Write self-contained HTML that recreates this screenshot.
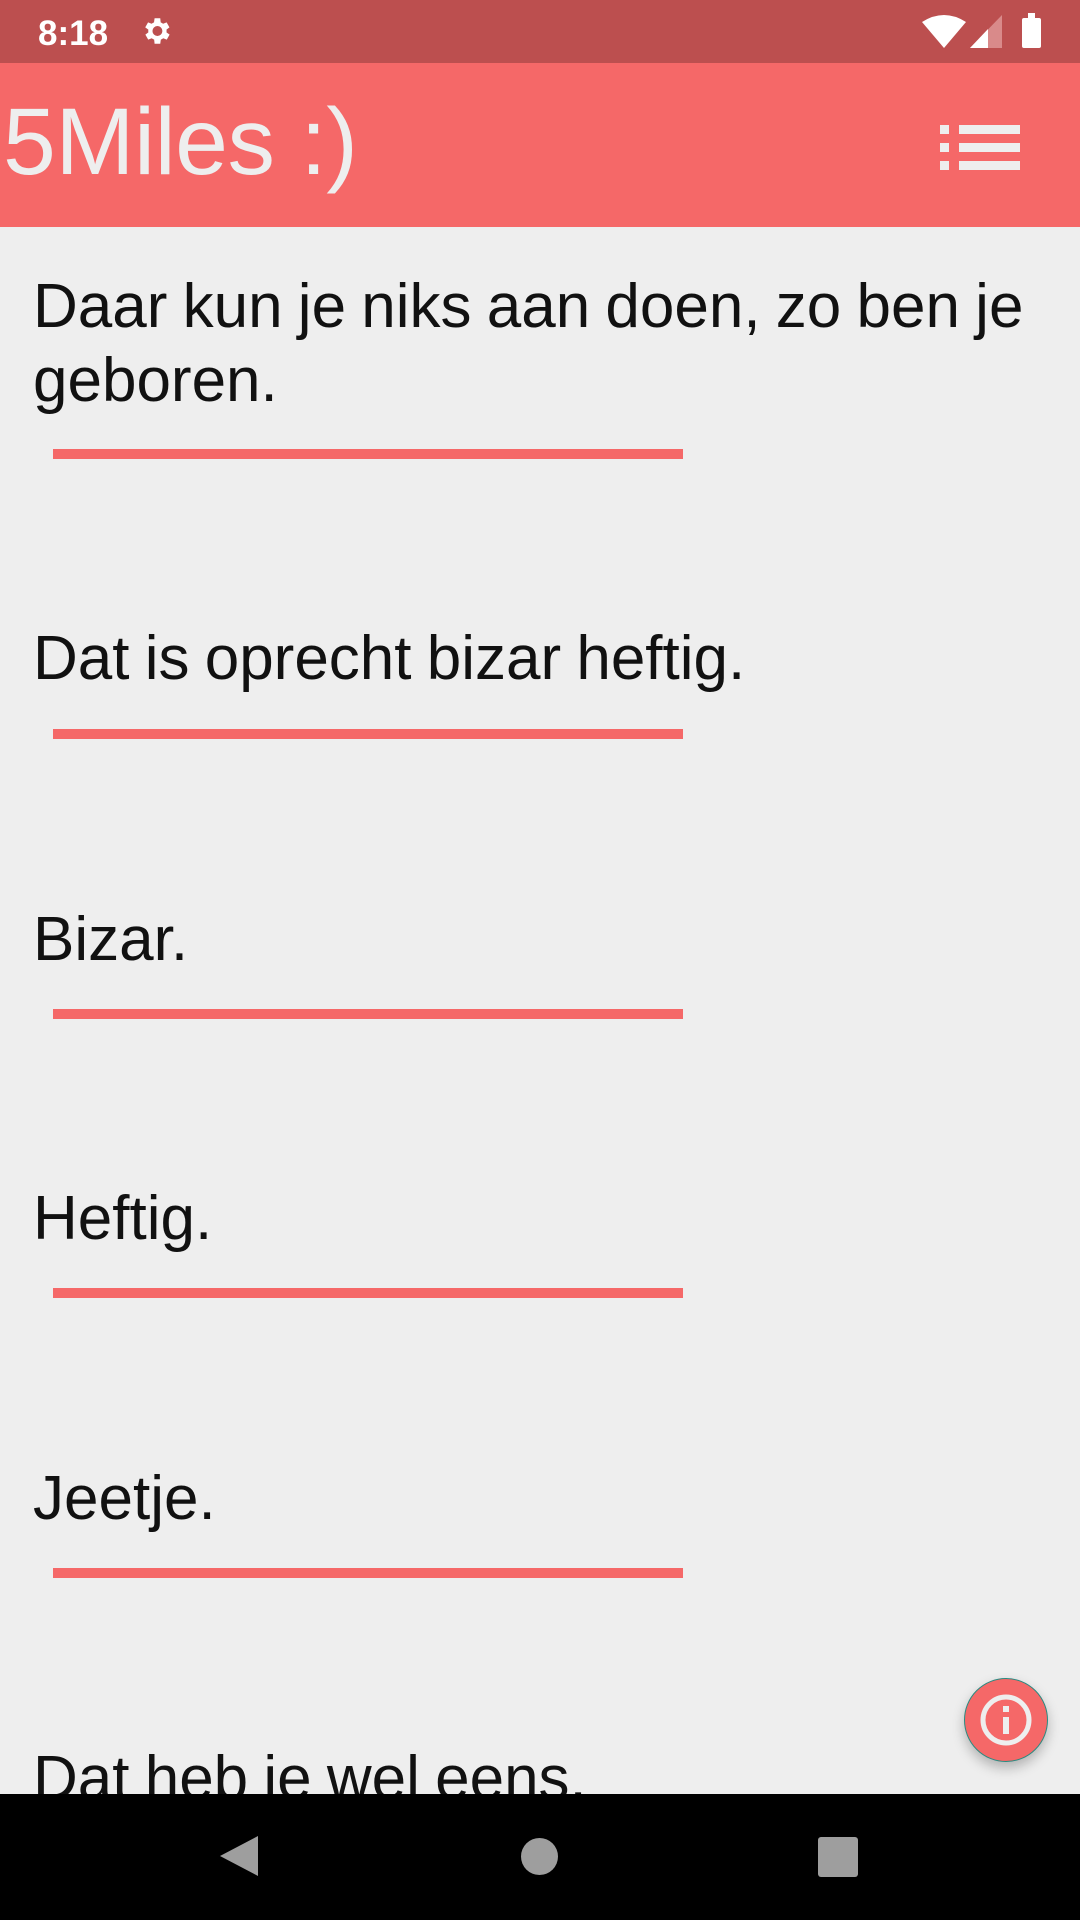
<!DOCTYPE html>
<html><head><meta charset="utf-8"><style>
*{margin:0;padding:0}
body{width:1080px;height:1920px;background:#eeeeee;position:relative;overflow:hidden;font-family:"Liberation Sans",sans-serif}
.a{position:absolute}
.t{position:absolute;left:33px;font-size:62px;line-height:64px;color:#111;white-space:nowrap;word-spacing:-2px}
.u{position:absolute;left:53px;width:630px;height:10px;background:#f56868}
</style></head><body>
<div class="a" style="left:0;top:0;width:1080px;height:63px;background:#bc4f4f"></div>
<div class="a" style="left:38px;top:14px;font-size:35px;line-height:40px;color:#fff;font-weight:bold">8:18</div>
<svg class="a" style="left:139px;top:14px" width="34" height="34" viewBox="0 0 24 24"><path fill="#fff" d="M19.4 13a7.5 7.5 0 0 0 0-2l2.1-1.6-2-3.5-2.5 1a7 7 0 0 0-1.7-1L15 3h-4l-.4 2.9a7 7 0 0 0-1.7 1l-2.5-1-2 3.5L6.6 11a7.5 7.5 0 0 0 0 2l-2.1 1.6 2 3.5 2.5-1a7 7 0 0 0 1.7 1L11 21h4l.4-2.9a7 7 0 0 0 1.7-1l2.5 1 2-3.5zM13 15.5a3.5 3.5 0 1 1 0-7 3.5 3.5 0 0 1 0 7z"/></svg>
<svg class="a" style="left:922px;top:14px" width="44" height="34" viewBox="0 0 44 34"><path fill="#fff" d="M0 8Q22-6 44 8L22 34z"/></svg>
<svg class="a" style="left:970px;top:15px" width="32" height="33" viewBox="0 0 32 33"><path fill="#d98a8a" d="M32 0V33H0z"/><path fill="#fff" d="M18 14V33H0L18 14z"/></svg>
<div class="a" style="left:1022px;top:18px;width:19px;height:30px;background:#fff;border-radius:2px"></div>
<div class="a" style="left:1028px;top:13px;width:7px;height:6px;background:#fff"></div>
<div class="a" style="left:0;top:63px;width:1080px;height:164px;background:#f56868"></div>
<div class="a" style="left:3px;top:95px;font-size:95px;line-height:95px;color:#eeeeee;white-space:nowrap;letter-spacing:-0.5px">5Miles :)</div>
<div class="a" style="left:940px;top:125px;width:9px;height:9px;background:#eee"></div>
<div class="a" style="left:940px;top:143px;width:9px;height:9px;background:#eee"></div>
<div class="a" style="left:940px;top:161px;width:9px;height:9px;background:#eee"></div>
<div class="a" style="left:959px;top:125px;width:61px;height:9px;background:#eee"></div>
<div class="a" style="left:959px;top:143px;width:61px;height:9px;background:#eee"></div>
<div class="a" style="left:959px;top:161px;width:61px;height:9px;background:#eee"></div>

<div class="t" style="top:275px">Daar kun je niks aan doen, zo ben je</div>
<div class="t" style="top:349px">geboren.</div>
<div class="u" style="top:449px"></div>
<div class="t" style="top:627px">Dat is oprecht bizar heftig.</div>
<div class="u" style="top:729px"></div>
<div class="t" style="top:908px">Bizar.</div>
<div class="u" style="top:1009px"></div>
<div class="t" style="top:1187px">Heftig.</div>
<div class="u" style="top:1288px"></div>
<div class="t" style="top:1467px">Jeetje.</div>
<div class="u" style="top:1568px"></div>
<div class="t" style="top:1747px">Dat heb je wel eens.</div>

<div class="a" style="left:964px;top:1678px;width:84px;height:84px;border-radius:50%;background:#f56868;box-shadow:0 6px 12px rgba(0,0,0,.25);border:1px solid #2a8a80;box-sizing:border-box"></div>
<svg class="a" style="left:978px;top:1692px" width="56" height="56" viewBox="0 0 56 56"><circle cx="28" cy="28" r="23" fill="none" stroke="#eee" stroke-width="5"/><rect x="25" y="25" width="6" height="17" fill="#eee"/><rect x="25" y="14" width="6" height="6" fill="#eee"/></svg>

<div class="a" style="left:0;top:1794px;width:1080px;height:126px;background:#000"></div>
<svg class="a" style="left:218px;top:1834px" width="42" height="44" viewBox="0 0 42 44"><path fill="#9e9e9e" d="M40 2V42L2 22z"/></svg>
<div class="a" style="left:521px;top:1838px;width:37px;height:37px;border-radius:50%;background:#9e9e9e"></div>
<div class="a" style="left:818px;top:1837px;width:40px;height:40px;border-radius:3px;background:#9e9e9e"></div>
</body></html>
